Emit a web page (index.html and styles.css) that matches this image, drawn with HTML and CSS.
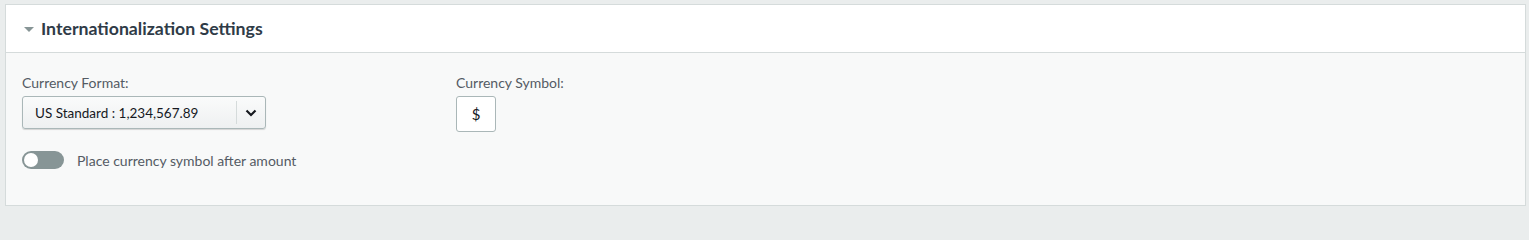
FILE: index.html
```html
<!DOCTYPE html>
<html>
<head>
<meta charset="utf-8">
<link rel="stylesheet" href="styles.css">
</head>
<body>
<section class="card">
  <header class="card-header">
    <span class="caret"></span>
    <h2 class="title">Internationalization Settings</h2>
  </header>
  <div class="card-body">
    <div class="fields">
      <div class="field field-format">
        <label class="label">Currency Format:</label>
        <div class="select">
          <span class="select-value">US Standard : 1,234,567.89</span>
          <span class="select-btn">
            <svg width="12" height="8" viewBox="0 0 12 8"><path d="M1.5 1.5 L6 6 L10.5 1.5" fill="none" stroke="#16191f" stroke-width="2.2"/></svg>
          </span>
        </div>
      </div>
      <div class="field">
        <label class="label">Currency Symbol:</label>
        <div class="symbol">$</div>
      </div>
    </div>
    <div class="toggle-row">
      <span class="toggle"><span class="knob"></span></span>
      <span class="toggle-label">Place currency symbol after amount</span>
    </div>
  </div>
</section>
</body>
</html>
```
FILE: styles.css
```css
html, body {
  margin: 0;
  padding: 0;
}
body {
  background: #eaeded;
  padding: 4px 3px 0 5px;
  font-family: "Lato", "Open Sans", sans-serif;
  color: #3c4650;
}
.card {
  border: 1px solid #d5dbdb;
  background: #ffffff;
}
.card-header {
  display: flex;
  align-items: center;
  padding-left: 18px;
  border-bottom: 1px solid #d5dbdb;
  box-sizing: border-box;
  height: 48px;
}
.caret {
  width: 0;
  height: 0;
  border-left: 5px solid transparent;
  border-right: 5px solid transparent;
  border-top: 5px solid #879596;
  margin-right: 7px;
  margin-top: 1px;
}
.title {
  margin: 0;
  font-size: 17.7px;
  font-weight: 700;
  color: #2f3b47;
}
.card-body {
  background: #f8f9f9;
  height: 152px;
  padding: 21px 16px 0 16px;
  box-sizing: border-box;
}
.fields {
  display: flex;
}
.field {
  display: flex;
  flex-direction: column;
}
.field-format {
  width: 434px;
}
.label {
  font-size: 14px;
  color: #545b64;
  line-height: 17px;
  margin-bottom: 5px;
}
.select {
  width: 244px;
  height: 33px;
  box-sizing: border-box;
  border: 1px solid #aab7b8;
  border-radius: 3px;
  background: linear-gradient(#fafbfb, #eef0f1);
  box-shadow: 0 1px 1px rgba(0,0,0,0.15);
  display: flex;
  align-items: center;
}
.select-value {
  flex: 1;
  padding-left: 12px;
  font-size: 13.5px;
  color: #16191f;
}
.select-btn {
  width: 28px;
  height: 23px;
  border-left: 1px solid #d5dbdb;
  display: flex;
  align-items: center;
  justify-content: center;
}
.symbol {
  width: 40px;
  height: 36px;
  box-sizing: border-box;
  border: 1px solid #aab7b8;
  border-radius: 3px;
  background: #ffffff;
  display: flex;
  align-items: center;
  justify-content: center;
  font-size: 15px;
  color: #16191f;
}
.toggle-row {
  display: flex;
  align-items: center;
  margin-top: 19px;
}
.toggle {
  width: 42px;
  height: 18px;
  border-radius: 9px;
  background: #879596;
  display: flex;
  align-items: center;
  padding-left: 2px;
  box-sizing: border-box;
}
.knob {
  width: 14px;
  height: 14px;
  border-radius: 50%;
  background: #ffffff;
}
.toggle-label {
  margin-left: 13px;
  font-size: 14px;
  color: #545b64;
}
```
